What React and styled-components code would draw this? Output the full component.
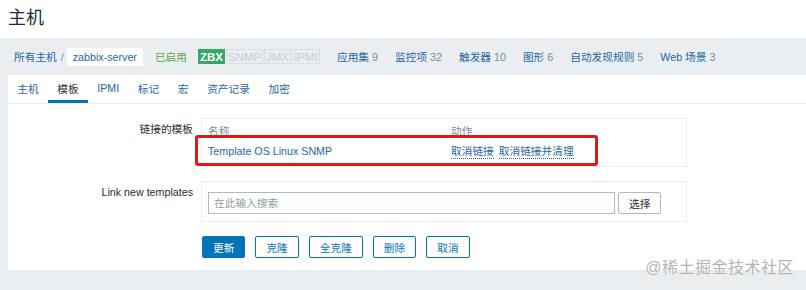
import React from 'react';
import styled, { createGlobalStyle } from 'styled-components';

const GlobalStyle = createGlobalStyle`
  html, body {
    margin: 0;
    padding: 0;
    background: #ebeef0;
  }
  body {
    font-family: "Liberation Sans", Arial, "Noto Sans CJK SC", sans-serif;
    font-size: 10.7px;
    color: #1f2c33;
  }
`;

const Page = styled.div`
  position: relative;
  width: 806px;
  height: 290px;
  overflow: hidden;
  background: #ebeef0;
`;

const Header = styled.header`
  height: 38px;
  background: #fff;
  padding-left: 8px;
  display: flex;
  align-items: center;
`;

const Title = styled.h1`
  margin: 0;
  font-size: 18px;
  font-weight: normal;
  color: #1f2c33;
  line-height: 1;
  margin-top: -2px;
`;

const Content = styled.div`
  padding-left: 8px;
`;

const Breadcrumbs = styled.div`
  height: 37px;
  display: flex;
  align-items: center;
  padding-left: 6px;
  white-space: nowrap;
`;

const Crumb = styled.a`
  color: #1f65a6;
  text-decoration: none;
`;

const Slash = styled.span`
  color: #768d99;
  margin: 0 2px 0 4px;
`;

const Current = styled.span`
  background: #fff;
  color: #1f65a6;
  padding: 0 6px;
  height: 18px;
  line-height: 18px;
  display: inline-block;
  margin-left: 1px;
`;

const Status = styled.span`
  color: #5ba14a;
  margin-left: 12px;
`;

const Badges = styled.span`
  display: inline-flex;
  margin-left: 11px;
  height: 15px;
`;

const Badge = styled.span`
  display: inline-block;
  height: 15px;
  line-height: 15px;
  padding: 0 1px;
  font-size: 11.5px;
  font-weight: ${p => (p.$on ? 'bold' : 'normal')};
  color: ${p => (p.$on ? '#fff' : '#c6ccd0')};
  background: ${p => (p.$on ? '#34a966' : '#ebeef0')};
  border: 1px solid ${p => (p.$on ? '#34a966' : '#d9dde0')};
  margin-right: 1px;
  width: ${p => p.$w}px;
  text-align: center;
  box-sizing: border-box;
`;

const Counts = styled.span`
  display: inline-flex;
  gap: 17px;
  margin-left: 16px;
`;

const Count = styled.span`
  color: #1f65a6;
  b {
    font-weight: normal;
    color: #768d99;
  }
`;

const Panel = styled.div`
  background: #fff;
  height: 195px;
`;

const Tabs = styled.div`
  display: flex;
  height: 28px;
  border-bottom: 1px solid #ebeef0;
`;

const Tab = styled.div`
  padding: 1px 9.3px 0;
  display: flex;
  align-items: center;
  color: ${p => (p.$active ? '#1f2c33' : '#1f65a6')};
  border-bottom: 3px solid ${p => (p.$active ? '#0275b8' : 'transparent')};
  box-sizing: border-box;
  height: 28px;
`;

const Form = styled.div`
  display: grid;
  grid-template-columns: 185px 486px;
  column-gap: 8px;
  row-gap: 14px;
  padding-top: 14px;
`;

const Label = styled.div`
  text-align: right;
  padding-top: ${p => p.$top}px;
  color: #1f2c33;
`;

const Box = styled.div`
  position: relative;
  border: 1px solid #ebeef0;
  padding: ${p => p.$pad};
`;

const TplTable = styled.div`
  display: grid;
  grid-template-columns: 243px 1fr;
  row-gap: 4px;
`;

const Th = styled.div`
  color: #768d99;
  line-height: 14px;
`;

const Td = styled.div`
  line-height: 18px;
  display: flex;
  gap: 5px;
  align-items: center;
`;

const Link = styled.a`
  color: #1f65a6;
  text-decoration: none;
`;

const DotLink = styled(Link)`
  border-bottom: 1px dotted #1f65a6;
  line-height: 14px;
`;

const Highlight = styled.div`
  position: absolute;
  left: -7px;
  top: 16px;
  width: 397px;
  height: 25px;
  border: 3px solid #e3161f;
  border-radius: 3px;
  pointer-events: none;
`;

const SearchRow = styled.div`
  display: flex;
  gap: 3px;
`;

const Input = styled.div`
  width: 407px;
  height: 22px;
  border: 1px solid #acbbc2;
  color: #8e9ca3;
  padding-left: 5px;
  line-height: 20px;
  box-sizing: border-box;
`;

const Button = styled.button`
  font-family: inherit;
  font-size: 10.7px;
  height: 22px;
  padding: 0 ${p => p.$px || 10}px;
  border-radius: 2px;
  cursor: pointer;
  border: 1px solid ${p => (p.$gray ? '#acbbc2' : '#0275b8')};
  background: ${p => (p.$primary ? '#0275b8' : '#fff')};
  color: ${p => (p.$primary ? '#fff' : p.$gray ? '#1f2c33' : '#0275b8')};
`;

const Actions = styled.div`
  grid-column: 2;
  display: flex;
  gap: 10px;
  margin-left: 1px;
`;

const Watermark = styled.div`
  position: absolute;
  right: 12px;
  bottom: 12px;
  font-size: 16px;
  color: #b4b4b4;
  text-shadow: 0 0 1px #fff;
  letter-spacing: 0.5px;
`;

const tabs = ['主机', '模板', 'IPMI', '标记', '宏', '资产记录', '加密'];
const counts = [
  ['应用集', 9],
  ['监控项', 32],
  ['触发器', 10],
  ['图形', 6],
  ['自动发现规则', 5],
  ['Web 场景', 3]
];

export default function App() {
  return (
    <Page>
      <GlobalStyle />
      <Header>
        <Title>主机</Title>
      </Header>
      <Content>
        <Breadcrumbs>
          <Crumb>所有主机</Crumb>
          <Slash>/</Slash>
          <Current>zabbix-server</Current>
          <Status>已启用</Status>
          <Badges>
            <Badge $on $w={27}>ZBX</Badge>
            <Badge $w={37}>SNMP</Badge>
            <Badge $w={27}>JMX</Badge>
            <Badge $w={28}>IPMI</Badge>
          </Badges>
          <Counts>
            {counts.map(([name, n]) => (
              <Count key={name}>
                {name} <b>{n}</b>
              </Count>
            ))}
          </Counts>
        </Breadcrumbs>
        <Panel>
          <Tabs>
            {tabs.map(t => (
              <Tab key={t} $active={t === '模板'}>
                {t}
              </Tab>
            ))}
          </Tabs>
          <Form>
            <Label $top={3}>链接的模板</Label>
            <Box $pad="5px 6px 6px">
              <TplTable>
                <Th>名称</Th>
                <Th>动作</Th>
                <Td>
                  <Link>Template OS Linux SNMP</Link>
                </Td>
                <Td>
                  <DotLink>取消链接</DotLink>
                  <DotLink>取消链接并清理</DotLink>
                </Td>
              </TplTable>
              <Highlight />
            </Box>
            <Label $top={5}>Link new templates</Label>
            <Box $pad="10px 6px 7px">
              <SearchRow>
                <Input>在此输入搜索</Input>
                <Button $gray>选择</Button>
              </SearchRow>
            </Box>
            <Actions>
              <Button $primary>更新</Button>
              <Button>克隆</Button>
              <Button>全克隆</Button>
              <Button>删除</Button>
              <Button>取消</Button>
            </Actions>
          </Form>
        </Panel>
      </Content>
      <Watermark>@稀土掘金技术社区</Watermark>
    </Page>
  );
}
